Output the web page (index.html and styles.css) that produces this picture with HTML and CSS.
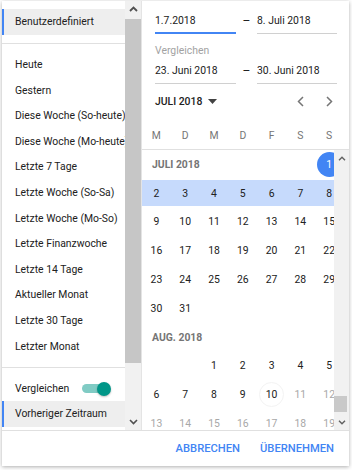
FILE: index.html
```html
<!DOCTYPE html>
<html lang="de">
<head>
<meta charset="utf-8">
<title>Zeitraum</title>
<link rel="stylesheet" href="styles.css">
</head>
<body>
<div class="card">
  <div class="main">
    <div class="left">
      <div class="list">
        <div class="sec">
          <div class="item sel">Benutzerdefiniert</div>
        </div>
        <div class="sec">
          <div class="item">Heute</div>
          <div class="item">Gestern</div>
          <div class="item">Diese Woche (So-heute)</div>
          <div class="item">Diese Woche (Mo-heute)</div>
          <div class="item">Letzte 7 Tage</div>
          <div class="item">Letzte Woche (So-Sa)</div>
          <div class="item">Letzte Woche (Mo-So)</div>
          <div class="item">Letzte Finanzwoche</div>
          <div class="item">Letzte 14 Tage</div>
          <div class="item">Aktueller Monat</div>
          <div class="item">Letzte 30 Tage</div>
          <div class="item">Letzter Monat</div>
        </div>
        <div class="sec last">
          <div class="cmp">
            <span class="cmp-label">Vergleichen</span>
            <span class="toggle"><span class="knob"></span></span>
          </div>
          <div class="item sel">Vorheriger Zeitraum</div>
        </div>
      </div>
      <div class="sb sb-left">
        <div class="sb-btn"><svg width="9" height="6" viewBox="0 0 9 6"><polyline points="1,5 4.5,1.5 8,5" fill="none" stroke="#505050" stroke-width="1.8"/></svg></div>
        <div class="sb-track"><div class="sb-thumb"></div></div>
        <div class="sb-btn"><svg width="9" height="6" viewBox="0 0 9 6"><polyline points="1,1 4.5,4.5 8,1" fill="none" stroke="#505050" stroke-width="1.6"/></svg></div>
      </div>
    </div>

    <div class="right">
      <div class="ranges">
        <div class="range">
          <div class="field active">1.7.2018</div>
          <div class="dash">–</div>
          <div class="field">8. Juli 2018</div>
        </div>
        <div class="cmp-title">Vergleichen</div>
        <div class="range second">
          <div class="field">23. Juni 2018</div>
          <div class="dash">–</div>
          <div class="field">30. Juni 2018</div>
        </div>
      </div>

      <div class="nav">
        <div class="month">JULI 2018
          <svg width="9" height="5" viewBox="0 0 9 5"><polygon points="0,0 9,0 4.5,5" fill="#424242"/></svg>
        </div>
        <div class="navbtn"><svg width="7" height="11" viewBox="0 0 7 11"><polyline points="6,1 1.5,5.5 6,10" fill="none" stroke="#757575" stroke-width="1.5"/></svg></div>
        <div class="navbtn"><svg width="7" height="11" viewBox="0 0 7 11"><polyline points="1,1 5.5,5.5 1,10" fill="none" stroke="#757575" stroke-width="1.5"/></svg></div>
      </div>

      <div class="dow">
        <span>M</span><span>D</span><span>M</span><span>D</span><span>F</span><span>S</span><span>S</span>
      </div>

      <div class="cal">
        <div class="cal-view">
          <div class="grid">
            <div class="row">
              <span class="mlabel">JULI 2018</span>
              <span class="d sel">1</span>
            </div>
            <div class="row wk">
              <span class="d">2</span><span class="d">3</span><span class="d">4</span><span class="d">5</span><span class="d">6</span><span class="d">7</span><span class="d">8</span>
            </div>
            <div class="row">
              <span class="d">9</span><span class="d">10</span><span class="d">11</span><span class="d">12</span><span class="d">13</span><span class="d">14</span><span class="d">15</span>
            </div>
            <div class="row">
              <span class="d">16</span><span class="d">17</span><span class="d">18</span><span class="d">19</span><span class="d">20</span><span class="d">21</span><span class="d">22</span>
            </div>
            <div class="row">
              <span class="d">23</span><span class="d">24</span><span class="d">25</span><span class="d">26</span><span class="d">27</span><span class="d">28</span><span class="d">29</span>
            </div>
            <div class="row">
              <span class="d">30</span><span class="d">31</span>
            </div>
            <div class="row">
              <span class="mlabel full">AUG. 2018</span>
            </div>
            <div class="row">
              <span></span><span></span><span class="d">1</span><span class="d">2</span><span class="d">3</span><span class="d">4</span><span class="d">5</span>
            </div>
            <div class="row">
              <span class="d">6</span><span class="d">7</span><span class="d">8</span><span class="d">9</span><span class="d today">10</span><span class="d dis">11</span><span class="d dis">12</span>
            </div>
            <div class="row">
              <span class="d dis">13</span><span class="d dis">14</span><span class="d dis">15</span><span class="d dis">16</span><span class="d dis">17</span><span class="d dis">18</span><span class="d dis">19</span>
            </div>
          </div>
        </div>
        <div class="sb sb-cal">
          <div class="sb-btn"><svg width="8" height="5" viewBox="0 0 8 5"><polyline points="1,4.2 4,1.2 7,4.2" fill="none" stroke="#606060" stroke-width="1.4"/></svg></div>
          <div class="sb-track"><div class="sb-thumb"></div></div>
          <div class="sb-btn"><svg width="8" height="5" viewBox="0 0 8 5"><polyline points="1,0.8 4,3.8 7,0.8" fill="none" stroke="#606060" stroke-width="1.4"/></svg></div>
        </div>
      </div>
    </div>
  </div>

  <div class="footer">
    <button class="btn">ABBRECHEN</button>
    <button class="btn">ÜBERNEHMEN</button>
  </div>
</div>
</body>
</html>
```

FILE: styles.css
```css
* { box-sizing: border-box; }

html, body {
  margin: 0;
  padding: 0;
  background: #ffffff;
}

body {
  font-family: Roboto, "Noto Sans", "Liberation Sans", sans-serif;
  font-size: 10.4px;
  color: #212121;
}

.card {
  margin: 1px 3px 4px 2px;
  width: 347px;
  height: 465px;
  background: #ffffff;
  box-shadow: 0 1px 4px rgba(0, 0, 0, 0.32);
  display: flex;
  flex-direction: column;
}

.main {
  height: 429px;
  display: flex;
}

/* ---------- left preset list ---------- */
.left {
  width: 140px;
  display: flex;
  border-right: 1px solid #e4e4e4;
  flex: none;
}

.list {
  width: 123px;
  overflow: hidden;
  white-space: nowrap;
  flex: none;
}

.sec {
  padding: 8px 0;
  border-bottom: 1px solid #e0e0e0;
}

.sec.last {
  border-bottom: none;
  padding-bottom: 0;
}

.item {
  height: 25.6px;
  line-height: 25.6px;
  padding-left: 11px;
  border-left: 2px solid transparent;
}

.item.sel {
  height: 26px;
  line-height: 26px;
  background: #eeeeee;
  border-left-color: #4285f4;
}

.cmp {
  height: 25px;
  display: flex;
  align-items: center;
  padding-left: 13px;
}

.cmp-label {
  width: 67px;
  flex: none;
}

.toggle {
  width: 26px;
  height: 9px;
  border-radius: 5px;
  background: #80cbc4;
  display: flex;
  align-items: center;
  justify-content: flex-end;
  flex: none;
}

.knob {
  width: 14px;
  height: 14px;
  border-radius: 50%;
  background: #009688;
  margin-right: -3px;
  flex: none;
  box-shadow: 0 1px 2px rgba(0, 0, 0, 0.25);
}

/* ---------- scrollbars ---------- */
.sb {
  display: flex;
  flex-direction: column;
  background: #f1f1f1;
  flex: none;
}

.sb-left { width: 16px; }
.sb-cal { width: 15px; }

.sb-btn {
  height: 16px;
  display: flex;
  align-items: center;
  justify-content: center;
  flex: none;
}

.sb-track {
  flex: 1;
  display: flex;
  flex-direction: column;
}

.sb-left .sb-thumb {
  margin-top: 2px;
  height: 344px;
  background: #c6c6c6;
}

.sb-cal .sb-thumb {
  margin-top: auto;
  margin-bottom: 2px;
  height: 16px;
  width: 13px;
  background: #c9c9c9;
}

/* ---------- right calendar ---------- */
.right {
  width: 207px;
  display: flex;
  flex-direction: column;
  flex: none;
}

.ranges {
  padding: 12px 12px 0 13px;
}

.range {
  display: grid;
  grid-template-columns: 81px 21px 80px;
  align-items: start;
}

.range.second {
  margin-top: 4px;
}

.field {
  line-height: 16px;
  padding-bottom: 4px;
  border-bottom: 1px solid #d0d0d0;
  white-space: nowrap;
}

.field.active {
  padding-bottom: 3px;
  border-bottom: 2px solid #4285f4;
}

.dash {
  line-height: 16px;
  text-align: center;
  font-size: 12px;
}

.cmp-title {
  margin-top: 9px;
  line-height: 16px;
  color: #a2a2a2;
}

.nav {
  margin-top: 7px;
  height: 20px;
  display: flex;
  align-items: center;
  padding-right: 5.6px;
}

.month {
  flex: 1;
  padding-left: 13px;
  font-weight: 500;
  display: flex;
  align-items: center;
  gap: 6px;
}

.navbtn {
  width: 28.8px;
  display: flex;
  justify-content: center;
  align-items: center;
}

.dow {
  margin-top: 10px;
  height: 29px;
  border-bottom: 1px solid #e0e0e0;
  display: grid;
  grid-template-columns: repeat(7, 28.8px);
  align-items: center;
  justify-items: center;
  color: #757575;
}

.cal {
  height: 280px;
  display: flex;
}

.cal-view {
  width: 192px;
  overflow: hidden;
  flex: none;
}

.grid {
  width: 201.6px;
}

.row {
  height: 28.8px;
  display: grid;
  grid-template-columns: repeat(7, 28.8px);
  align-items: center;
  justify-items: center;
}

.row.wk {
  padding: 1.4px 0;
  background: #c6dafc;
  background-clip: content-box;
}

.mlabel {
  grid-column: span 6;
  justify-self: start;
  padding-left: 10px;
  font-weight: 700;
  color: #757575;
}

.mlabel.full {
  grid-column: span 7;
}

.d {
  width: 25px;
  height: 25px;
  border-radius: 50%;
  display: flex;
  align-items: center;
  justify-content: center;
}

.d.sel {
  background: #4285f4;
  color: #ffffff;
}

.d.today {
  border: 1px solid #f3f3f3;
}

.d.dis {
  color: #a8a8a8;
}

/* ---------- footer ---------- */
.footer {
  border-top: 1px solid #e0e0e0;
  height: 36px;
  display: flex;
  justify-content: flex-end;
  align-items: center;
  gap: 20px;
  padding-right: 15px;
}

.btn {
  background: none;
  border: none;
  padding: 0;
  font-family: Roboto, "Noto Sans", "Liberation Sans", sans-serif;
  font-size: 11.2px;
  font-weight: 500;
  color: #4285f4;
}
```
